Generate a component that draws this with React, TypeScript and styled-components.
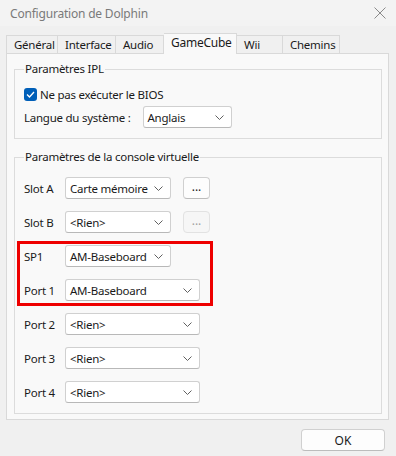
import styled, { createGlobalStyle } from "styled-components";

const GlobalStyle = createGlobalStyle`
  html, body {
    margin: 0;
    padding: 0;
    background: #f0f0f0;
  }
  body {
    font-family: "Noto Sans", "Open Sans", sans-serif;
    font-size: 11.5px;
    letter-spacing: -0.25px;
    color: #1a1a1a;
  }
`;

const tabs = [
  { name: "Général", width: 52 },
  { name: "Interface", width: 58 },
  { name: "Audio", width: 48 },
  { name: "GameCube", width: 73 },
  { name: "Wii", width: 46 },
  { name: "Chemins", width: 57 },
];

const ports = ["Port 2", "Port 3", "Port 4"];

function Chevron() {
  return (
    <svg width="9" height="5" viewBox="0 0 9 5">
      <path d="M0.5 0.5 L4.5 4.5 L8.5 0.5" fill="none" stroke="#606060" strokeWidth="1" />
    </svg>
  );
}

function Dropdown({ value, width }: { value: string; width: number }) {
  return (
    <Select $width={width}>
      <span>{value}</span>
      <Chevron />
    </Select>
  );
}

function App() {
  return (
    <>
      <GlobalStyle />
      <Window>
        <TitleBar>
          <Title>Configuration de Dolphin</Title>
          <svg width="12" height="12" viewBox="0 0 12 12">
            <path d="M0.5 0.5 L11.5 11.5 M11.5 0.5 L0.5 11.5" stroke="#8a8a8a" strokeWidth="1" />
          </svg>
        </TitleBar>

        <TabBar>
          {tabs.map((t) => (
            <Tab key={t.name} $width={t.width} $active={t.name === "GameCube"}>
              {t.name}
            </Tab>
          ))}
        </TabBar>

        <Panel>
          <Group>
            <Legend>Paramètres IPL</Legend>
            <CheckRow>
              <CheckBox>
                <svg width="9" height="7" viewBox="0 0 9 7">
                  <path d="M1 3.5 L3.5 6 L8 1" fill="none" stroke="#fff" strokeWidth="1.3" />
                </svg>
              </CheckBox>
              Ne pas exécuter le BIOS
            </CheckRow>
            <LangRow>
              <span>Langue du système :</span>
              <Dropdown value="Anglais" width={89} />
            </LangRow>
          </Group>

          <Group $grow>
            <Legend>Paramètres de la console virtuelle</Legend>
            <Rows>
              <Row>
                <Label>Slot A</Label>
                <Dropdown value="Carte mémoire" width={106} />
                <MoreButton>...</MoreButton>
              </Row>
              <Row>
                <Label>Slot B</Label>
                <Dropdown value="<Rien>" width={106} />
                <MoreButton disabled>...</MoreButton>
              </Row>
              <Highlight>
                <Row>
                  <Label>SP1</Label>
                  <Dropdown value="AM-Baseboard" width={106} />
                </Row>
                <Row>
                  <Label>Port 1</Label>
                  <Dropdown value="AM-Baseboard" width={135} />
                </Row>
              </Highlight>
              {ports.map((p) => (
                <Row key={p}>
                  <Label>{p}</Label>
                  <Dropdown value="<Rien>" width={135} />
                </Row>
              ))}
            </Rows>
          </Group>
        </Panel>

        <Footer>
          <OkButton>OK</OkButton>
        </Footer>
      </Window>
    </>
  );
}

export default App;

const Window = styled.div`
  width: 396px;
  height: 456px;
  display: flex;
  flex-direction: column;
  background: #f0f0f0;
  overflow: hidden;
`;

const TitleBar = styled.div`
  height: 26px;
  display: flex;
  align-items: center;
  justify-content: space-between;
  padding: 0 10px 0 10px;
  background: #f3f3f3;
`;

const Title = styled.div`
  color: #7a7a7a;
  font-size: 12px;
  letter-spacing: -0.2px;
`;

const TabBar = styled.div`
  display: flex;
  align-items: flex-end;
  padding: 7px 0 0 6px;
  height: 21px;
  position: relative;
  z-index: 1;
`;

const Tab = styled.div<{ $width: number; $active?: boolean }>`
  box-sizing: border-box;
  width: ${(p) => p.$width}px;
  height: ${(p) => (p.$active ? 21 : 19)}px;
  padding-left: 7px;
  display: flex;
  align-items: center;
  border: 1px solid #d9d9d9;
  border-left: none;
  border-bottom: ${(p) => (p.$active ? "none" : "1px solid #d9d9d9")};
  background: ${(p) => (p.$active ? "#f9f9f9" : "#f0f0f0")};
  padding-bottom: ${(p) => (p.$active ? 3 : 0)}px;
  font-size: ${(p) => (p.$active ? 12 : 11.5)}px;
  &:first-child {
    border-left: 1px solid #d9d9d9;
  }
`;

const Panel = styled.div`
  margin: -1px 7px 0 6px;
  height: 367px;
  box-sizing: border-box;
  border: 1px solid #d9d9d9;
  background: #f9f9f9;
  padding: 7px 6px 8px 7px;
  display: flex;
  flex-direction: column;
  gap: 10px;
`;

const Group = styled.fieldset<{ $grow?: boolean }>`
  margin: 0;
  border: 1px solid #dcdcdc;
  padding: 0 9px 10px 9px;
  flex: ${(p) => (p.$grow ? 1 : "none")};
  display: flex;
  flex-direction: column;
`;

const Legend = styled.legend`
  padding: 0 1px;
  line-height: 16px;
`;

const CheckRow = styled.div`
  display: flex;
  align-items: center;
  gap: 3px;
  margin-top: 9px;
  height: 16px;
`;

const CheckBox = styled.span`
  width: 13px;
  height: 13px;
  border-radius: 3px;
  background: #005fb8;
  display: flex;
  align-items: center;
  justify-content: center;
`;

const LangRow = styled.div`
  display: flex;
  align-items: center;
  gap: 12px;
  margin-top: 4px;
`;

const Select = styled.div<{ $width: number }>`
  box-sizing: border-box;
  width: ${(p) => p.$width}px;
  height: 22px;
  padding: 0 7px 0 4px;
  display: flex;
  align-items: center;
  justify-content: space-between;
  background: #ffffff;
  border: 1px solid #d0d0d0;
  border-bottom-color: #b8b8b8;
  border-radius: 3px;
  white-space: nowrap;
`;

const Rows = styled.div`
  display: flex;
  flex-direction: column;
  gap: 12px;
  margin-top: 12px;
`;

const Row = styled.div`
  display: flex;
  align-items: center;
  height: 22px;
`;

const Label = styled.span`
  width: 41px;
  flex: none;
`;

const MoreButton = styled.button`
  margin-left: 12px;
  box-sizing: border-box;
  width: 27px;
  height: 22px;
  padding: 0 0 4px 0;
  font-family: inherit;
  font-size: 12px;
  color: #1a1a1a;
  background: #fdfdfd;
  border: 1px solid #d0d0d0;
  border-bottom-color: #bcbcbc;
  border-radius: 4px;
  &:disabled {
    color: #a0a0a0;
    background: #f6f6f6;
    border-color: #e2e2e2;
  }
`;

const Highlight = styled.div`
  display: flex;
  flex-direction: column;
  gap: 12px;
  width: fit-content;
  margin: -4px 0 -5px -7px;
  padding: 1px 10px 2px 4px;
  border: 3px solid #ee0000;
`;

const Footer = styled.div`
  display: flex;
  justify-content: flex-end;
  padding: 9px 11px 0 0;
`;

const OkButton = styled.button`
  box-sizing: border-box;
  width: 84px;
  height: 22px;
  font-family: inherit;
  font-size: 12px;
  color: #1a1a1a;
  background: #fdfdfd;
  border: 1px solid #d0d0d0;
  border-bottom-color: #bcbcbc;
  border-radius: 4px;
`;
